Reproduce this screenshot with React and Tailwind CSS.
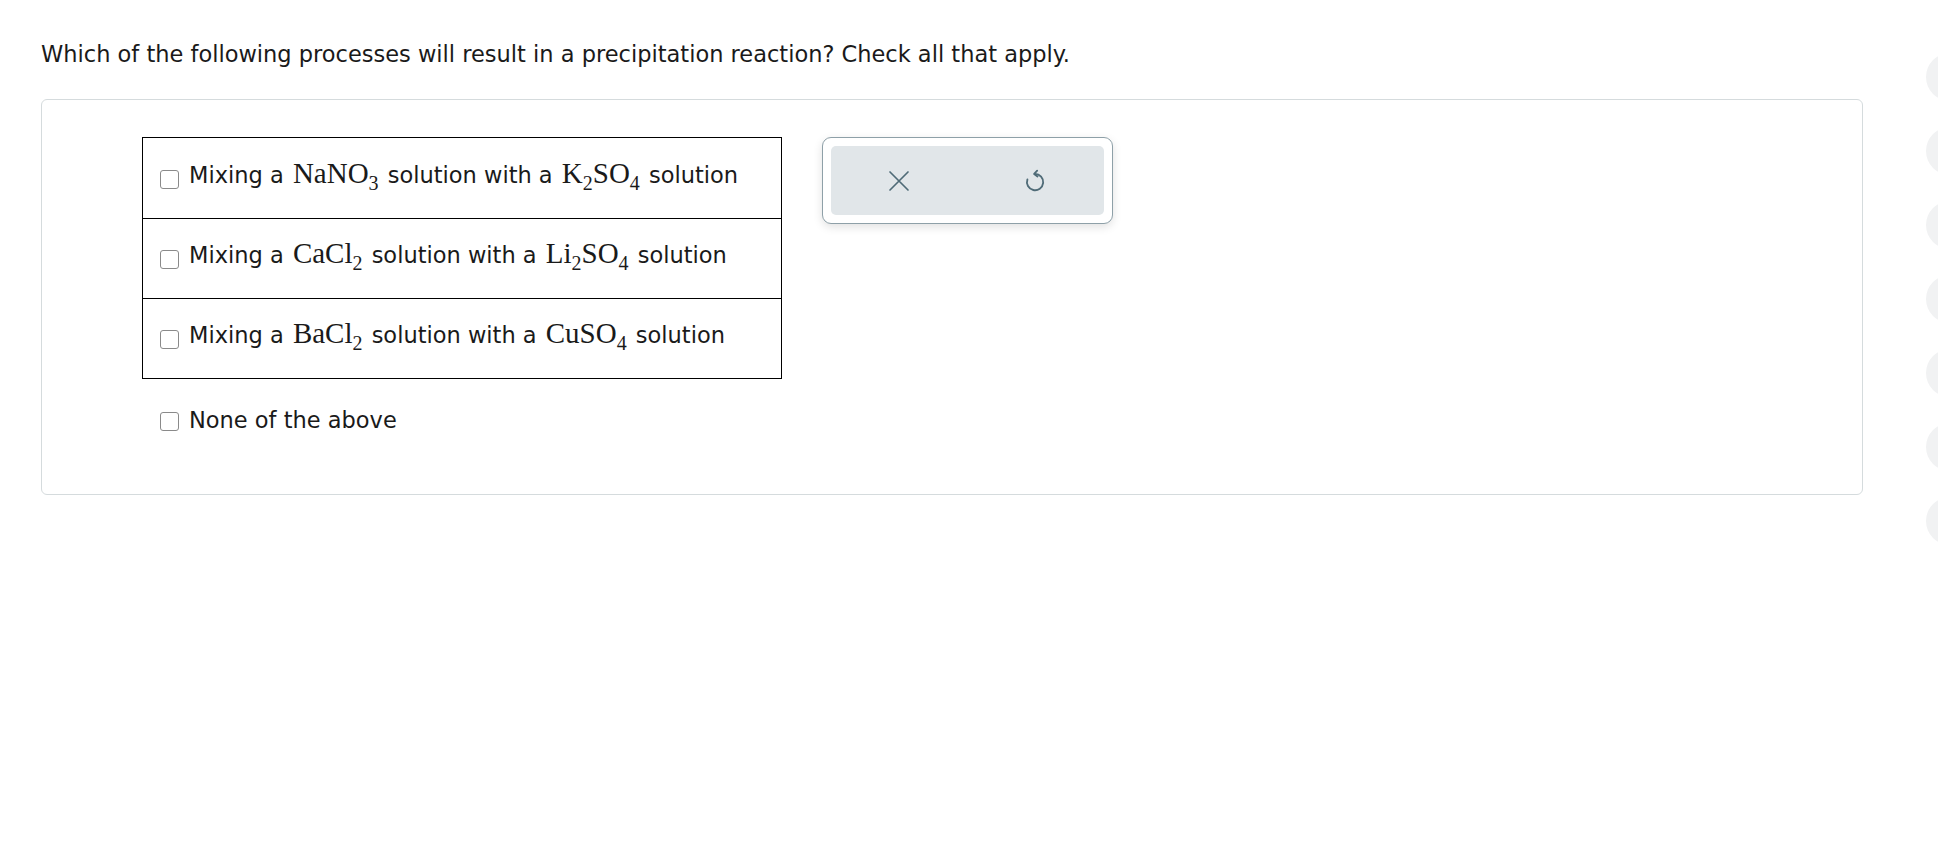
import React from 'react';

const Sub = ({ children }) => (
  <sub className="text-[20px] relative top-[7px] align-baseline leading-none">{children}</sub>
);

const F = ({ children }) => (
  <span className="font-['Liberation_Serif',serif] text-[29px] leading-none mx-[2px]">{children}</span>
);

const Box = ({ className = '' }) => (
  <span className={`inline-block w-[19px] h-[19px] rounded-[3px] border-[1.5px] border-[#8a8a8a] bg-white shrink-0 ${className}`} />
);

const rows = [
  <>Mixing a <F>NaNO<Sub>3</Sub></F> solution with a <F>K<Sub>2</Sub>SO<Sub>4</Sub></F> solution</>,
  <>Mixing a <F>CaCl<Sub>2</Sub></F> solution with a <F>Li<Sub>2</Sub>SO<Sub>4</Sub></F> solution</>,
  <>Mixing a <F>BaCl<Sub>2</Sub></F> solution with a <F>CuSO<Sub>4</Sub></F> solution</>,
];

const UndoIcon = () => (
  <svg width="26" height="26" viewBox="0 0 24 24" fill="none" stroke="#4f6b77" strokeWidth="1.7" strokeLinecap="round" strokeLinejoin="round">
    <path d="M12 5.5a7.5 7.5 0 1 1-7 5" />
    <path d="M14 2.5 11.2 5.5l3.1 2.3" />
  </svg>
);

export default function App() {
  return (
    <div className="min-h-screen bg-white font-['DejaVu_Sans',Verdana,sans-serif] text-[#1a1a1a] relative overflow-hidden">
      <div className="pl-[41px] pr-[75px] pt-[39px]">
        <p className="text-[22.5px] leading-[30px]">
          Which of the following processes will result in a precipitation reaction? Check all that apply.
        </p>
        <div className="mt-[30px] border border-[#d5dbdd] rounded-[6px] pl-[100px] pt-[37px] pb-[59px] flex items-start gap-[40px]">
          <div className="w-[640px]">
            <div className="border border-black">
              {rows.map((r, i) => (
                <div key={i} className={`h-[80px] flex items-center gap-[10px] pl-[17px] pb-[8px] ${i > 0 ? 'border-t border-black' : ''}`}>
                  <Box className="mt-[10px]" />
                  <span className="text-[22.5px] leading-[30px]">{r}</span>
                </div>
              ))}
            </div>
            <div className="flex items-center gap-[10px] pl-[18px] mt-[26px]">
              <Box className="mt-[2px]" />
              <span className="text-[22.5px] leading-[30px]">None of the above</span>
            </div>
          </div>
          <div className="w-[291px] h-[87px] rounded-[9px] border border-[#8ea0a8] bg-white p-[8px] shadow-[0_3px_10px_rgba(0,0,0,0.12)]">
            <div className="h-full w-full rounded-[5px] bg-[#e1e6e9] flex items-center justify-around">
              <svg width="24" height="24" viewBox="0 0 24 24" fill="none" stroke="#4f6b77" strokeWidth="1.7" strokeLinecap="round">
                <path d="M3 3l18 18M21 3L3 21" />
              </svg>
              <UndoIcon />
            </div>
          </div>
        </div>
      </div>
      <div className="absolute right-[-36px] top-[53px] flex flex-col gap-[26px]">
        {[0, 1, 2, 3, 4, 5, 6].map((i) => (
          <div key={i} className="w-[48px] h-[48px] rounded-full bg-[#f1f2f3]" />
        ))}
      </div>
    </div>
  );
}
